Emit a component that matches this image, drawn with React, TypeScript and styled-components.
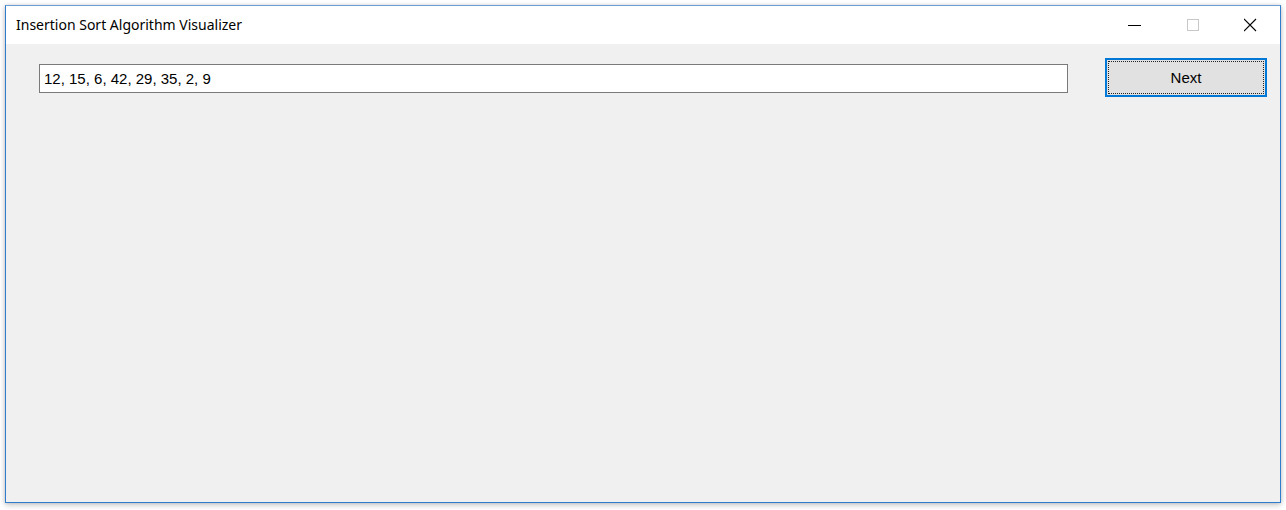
import React from "react";
import styled, { createGlobalStyle } from "styled-components";

const Global = createGlobalStyle`
  html, body { margin: 0; padding: 0; background: #ffffff; }
  body { width: 1286px; height: 510px; overflow: hidden; }
`;

const Window = styled.div`
  margin: 5px 0 0 5px;
  width: 1274px;
  height: 496px;
  border: 1px solid #2f7bcc;
  border-top-color: #6a9fd6;
  background: #f0f0f0;
  display: flex;
  flex-direction: column;
  box-shadow: 0 2px 6px rgba(0, 0, 0, 0.22), 0 0 3px rgba(0, 0, 0, 0.12);
`;

const TitleBar = styled.div`
  height: 38px;
  background: #ffffff;
  display: flex;
  align-items: center;
  padding-left: 10px;
  flex-shrink: 0;
`;

const Title = styled.span`
  flex: 1;
  font-family: "Noto Sans", "Open Sans", sans-serif;
  font-size: 14px;
  color: #000;
  margin-top: -1px;
`;

const Controls = styled.div`
  display: flex;
  height: 100%;
`;

const CtrlButton = styled.div`
  width: 58px;
  height: 100%;
  display: flex;
  align-items: center;
  justify-content: center;
`;

const Content = styled.div`
  display: flex;
  align-items: flex-start;
  padding: 14px 13px 0 33px;
  gap: 37px;
`;

const TextBox = styled.div`
  flex: 1;
  margin-top: 6px;
  height: 27px;
  border: 1px solid #7a7a7a;
  background: #ffffff;
  display: flex;
  align-items: center;
  padding-left: 4px;
  font-family: "Liberation Sans", Arial, sans-serif;
  font-size: 15px;
  color: #000;
`;

const Button = styled.div`
  width: 158px;
  height: 35px;
  border: 2px solid #0078d7;
  background: #e1e1e1;
  display: flex;
  align-items: center;
  justify-content: center;
  position: relative;
  font-family: "Liberation Sans", Arial, sans-serif;
  font-size: 15px;
  color: #000;
  &::after {
    content: "";
    position: absolute;
    inset: 1px;
    border: 1px dotted #222;
  }
`;

export default function App() {
  return (
    <>
      <Global />
      <Window>
        <TitleBar>
          <Title>Insertion Sort Algorithm Visualizer</Title>
          <Controls>
            <CtrlButton>
              <svg width="14" height="14" viewBox="0 0 14 14">
                <line x1="0" y1="7.5" x2="13" y2="7.5" stroke="#000" strokeWidth="1" />
              </svg>
            </CtrlButton>
            <CtrlButton>
              <svg width="14" height="14" viewBox="0 0 14 14">
                <rect x="1.5" y="1.5" width="11" height="11" fill="none" stroke="#c8c8c8" strokeWidth="1" />
              </svg>
            </CtrlButton>
            <CtrlButton>
              <svg width="14" height="14" viewBox="0 0 14 14">
                <path d="M0 1 L12 13 M12 1 L0 13" stroke="#000" strokeWidth="1.1" />
              </svg>
            </CtrlButton>
          </Controls>
        </TitleBar>
        <Content>
          <TextBox>12, 15, 6, 42, 29, 35, 2, 9</TextBox>
          <Button>Next</Button>
        </Content>
      </Window>
    </>
  );
}
